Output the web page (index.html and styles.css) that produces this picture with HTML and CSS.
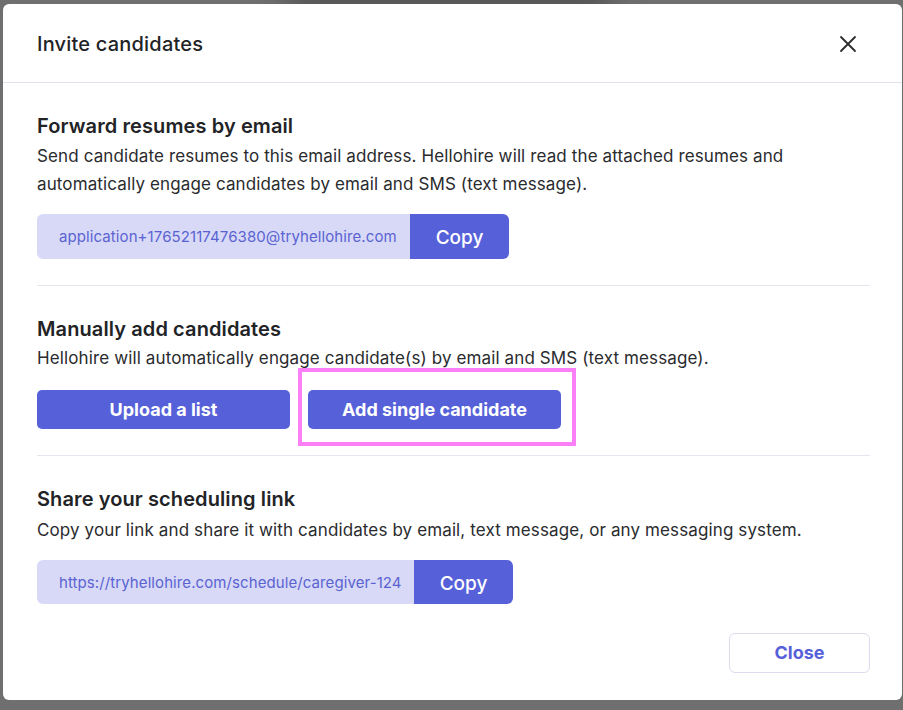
FILE: index.html
```html
<!DOCTYPE html>
<html lang="en">
<head>
<meta charset="utf-8">
<title>Invite candidates</title>
<link rel="stylesheet" href="styles.css">
</head>
<body>
<div class="backdrop-shadow"></div>
<div class="modal">
  <header class="modal-header">
    <h1 class="modal-title">Invite candidates</h1>
    <button class="icon-close" aria-label="Close">
      <svg width="18" height="18" viewBox="0 0 18 18"><path d="M2 2 L16 16 M16 2 L2 16" stroke="#2b2b2b" stroke-width="1.8" stroke-linecap="round" fill="none"/></svg>
    </button>
  </header>

  <section class="section section-first">
    <h2 class="section-title">Forward resumes by email</h2>
    <p class="section-desc">Send candidate resumes to this email address. Hellohire will read the attached resumes and automatically engage candidates by email and SMS (text message).</p>
    <div class="copy-field">
      <span class="copy-value copy-value-email">application+17652117476380@tryhellohire.com</span>
      <button class="copy-btn">Copy</button>
    </div>
  </section>

  <section class="section">
    <h2 class="section-title">Manually add candidates</h2>
    <p class="section-desc">Hellohire will automatically engage candidate(s) by email and SMS (text message).</p>
    <div class="btn-row">
      <button class="primary-btn">Upload a list</button>
      <div class="highlight-wrap">
        <button class="primary-btn">Add single candidate</button>
        <span class="highlight-box"></span>
      </div>
    </div>
  </section>

  <section class="section section-last">
    <h2 class="section-title">Share your scheduling link</h2>
    <p class="section-desc">Copy your link and share it with candidates by email, text message, or any messaging system.</p>
    <div class="copy-field">
      <span class="copy-value copy-value-link">https://tryhellohire.com/schedule/caregiver-124</span>
      <button class="copy-btn">Copy</button>
    </div>
  </section>

  <footer class="modal-footer">
    <button class="secondary-btn">Close</button>
  </footer>
</div>
</body>
</html>
```

FILE: styles.css
```css
* { box-sizing: border-box; }

html, body {
  margin: 0;
  padding: 0;
}

body {
  background: #6f6f6f;
  font-family: Inter, "Noto Sans", "Liberation Sans", sans-serif;
  color: #222326;
  overflow: hidden;
  height: 710px;
  position: relative;
}

.backdrop-shadow {
  position: absolute;
  left: 300px;
  top: -40px;
  width: 300px;
  height: 40px;
  background: #5a5a5a;
  box-shadow: 0 4px 28px 14px rgba(70, 70, 70, 0.6);
  border-radius: 10px;
}

.modal {
  position: relative;
  margin: 4px 0 0 3px;
  width: 899px;
  height: 696px;
  background: #ffffff;
  border-radius: 6px;
  display: flex;
  flex-direction: column;
}

.modal-header {
  height: 79px;
  border-bottom: 1px solid #e3e1ee;
  display: flex;
  align-items: center;
  justify-content: space-between;
  padding: 2px 45px 0 34px;
}

.modal-title {
  margin: 0;
  font-size: 20px;
  font-weight: 500;
  color: #222326;
  letter-spacing: 0.2px;
}

.icon-close {
  border: none;
  background: none;
  padding: 0;
  width: 18px;
  height: 18px;
  display: flex;
  cursor: pointer;
}

.section {
  margin: 0 32px 0 34px;
  padding: 28px 0 26px;
  border-bottom: 1px solid #e6e5ef;
}

.section-first .section-desc {
  margin-top: 1px;
}

.section-first .copy-field {
  margin-top: 16px;
}

.section-last {
  border-bottom: none;
  padding-top: 28px;
  padding-bottom: 0;
}

.section-last .section-desc {
  margin-top: 2px;
}

.section-title {
  margin: 0;
  font-size: 20px;
  line-height: 30px;
  font-weight: 600;
  color: #222326;
  letter-spacing: 0.1px;
}

.section-desc {
  margin: 0;
  font-size: 17px;
  line-height: 28px;
  color: #2a2b2e;
  letter-spacing: 0.12px;
}

.copy-field {
  margin-top: 17px;
  display: flex;
  height: 45px;
  border-radius: 6px;
  overflow: hidden;
  width: max-content;
}

.section-last .copy-field {
  margin-top: 16px;
  height: 44px;
}

.copy-value {
  background: #d7d9f6;
  color: #5b63d2;
  font-size: 15px;
  letter-spacing: 0.09px;
  display: flex;
  align-items: center;
  padding-left: 22px;
  white-space: nowrap;
  overflow: hidden;
}

.copy-value-email { width: 373px; }
.copy-value-link { width: 377px; }

.copy-btn {
  width: 99px;
  border: none;
  background: #5661d9;
  color: #ffffff;
  font-family: inherit;
  font-size: 19px;
  font-weight: 500;
  cursor: pointer;
  padding: 2px 0 0;
}

.btn-row {
  margin-top: 18px;
  display: flex;
  gap: 18px;
}

.primary-btn {
  width: 253px;
  height: 39px;
  border: none;
  border-radius: 5px;
  background: #5661d9;
  color: #ffffff;
  font-family: inherit;
  font-size: 18px;
  font-weight: 700;
  cursor: pointer;
  padding: 0 0 1px;
}

.highlight-wrap {
  position: relative;
  display: flex;
}

.highlight-box {
  position: absolute;
  left: -10px;
  top: -22px;
  width: 278px;
  height: 78px;
  border: 4px solid #fb80f8;
  pointer-events: none;
}

.modal-footer {
  margin-top: auto;
  display: flex;
  justify-content: flex-end;
  padding: 0 32px 27px 34px;
}

.secondary-btn {
  width: 141px;
  height: 40px;
  border: 1px solid #dcdcf0;
  border-radius: 6px;
  background: #ffffff;
  color: #5661d9;
  font-family: inherit;
  font-size: 18px;
  font-weight: 700;
  cursor: pointer;
  padding: 0 0 1px;
}
```
